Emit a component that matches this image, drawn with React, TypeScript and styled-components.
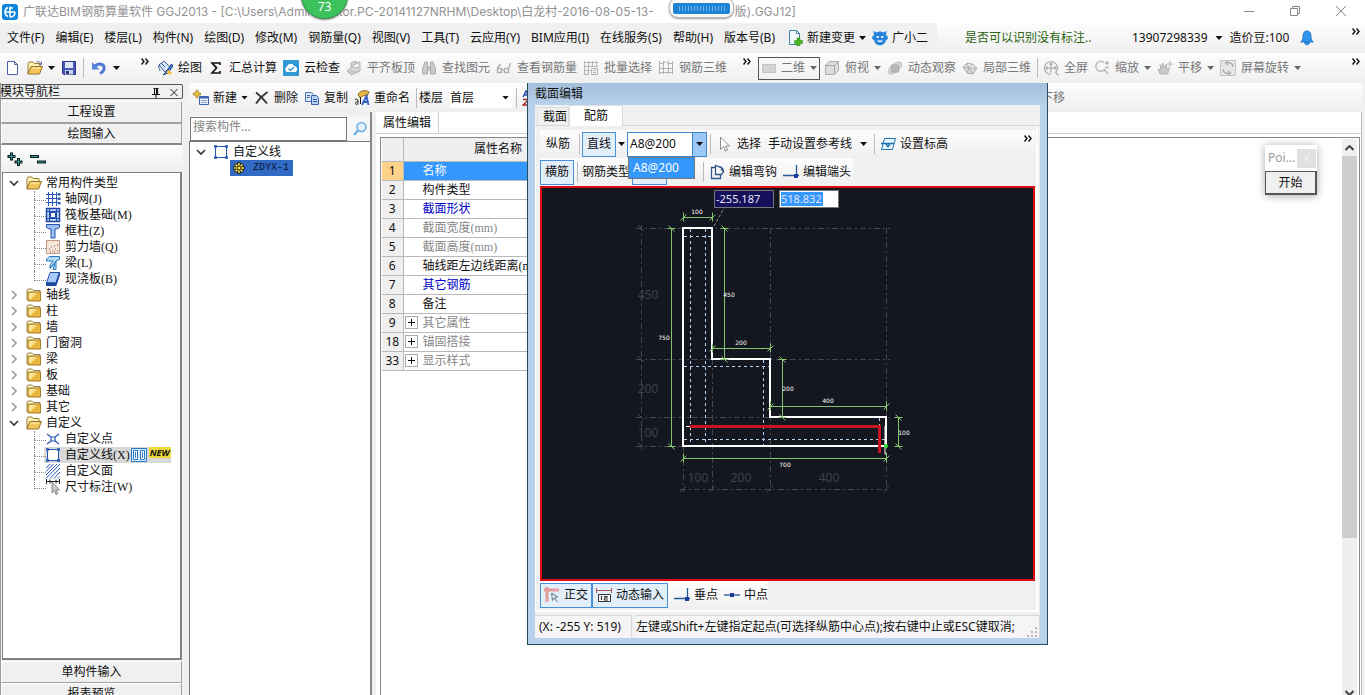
import React from "react";
import styled, { createGlobalStyle, css } from "styled-components";

const UI = '"Noto Sans", "Noto Sans CJK SC", sans-serif';
const SONG = '"Liberation Serif", "Noto Sans CJK SC", serif';

const Global = createGlobalStyle`
  * { box-sizing: border-box; }
  body { margin: 0; background: #f0f0f0; overflow: hidden; }
  button, input, select { font: inherit; color: inherit; }
  button { border: 0; background: none; padding: 0; margin: 0; white-space: nowrap; }
`;

/* ---------- icons ---------- */

const folder = (
  <>
    <path d="M1 13V3.500L2 2h4l1.500 1.500H14V13z" fill="#fff3c8" stroke="#9a8350" />
    <path d="M2 5h12.500v9H2z" fill="#eab83c" stroke="#a5802c" />
    <path d="M3 6h8l-6 6H3z" fill="#fde494" />
  </>
);

const openFolder = (
  <>
    <path d="M1 14V3.500L2 2h4l1.500 1.500H13V7" fill="#fff0b4" stroke="#9a7a30" />
    <path d="M1 14L4 6.500h11.500L12.500 14z" fill="#f3c65a" stroke="#94732a" />
    <path d="M5 8h8" stroke="#fff0b8" />
  </>
);

const frame = (
  <path
    d="M2.500 2.500h11v11h-11zM1.500 1.500h2v2h-2zM12.500 1.500h2v2h-2zM1.500 12.500h2v2h-2zM12.500 12.500h2v2h-2z"
    fill="#fff"
    stroke="#2454b4"
  />
);

const ICONS: Record<string, React.ReactNode> = {
  logo: (
    <>
      <rect width="16" height="16" rx="3" fill="#0d86dc" />
      <path d="M8 2.500v11M3 8h10M6 3.500C3.500 4.500 3 6 3 8s.5 3.500 3 4.500M8 13c3 0 5-2 5-5M8 4h3" fill="none" stroke="#fff" strokeWidth="1.500" />
    </>
  ),
  file: <path d="M2.500 1.500h7l3 3v10h-10zM9.500 1.500v3h3" fill="#fff" stroke="#44659f" />,
  open: (
    <>
      {openFolder}
      <path d="M9 2.500c2-1.500 4-1 5 1.500M14.500 1.500V4.500H12" fill="none" stroke="#5a76a8" />
    </>
  ),
  save: (
    <>
      <path d="M1.500 1.500h13v13h-12l-1-1z" fill="#4858b8" stroke="#2c3488" />
      <path d="M4 2h8v6H4z" fill="#dfe6fa" />
      <path d="M4 10h8v4.500H4z" fill="#c9d0ea" />
      <path d="M5 11h3v3H5z" fill="#2c3488" />
    </>
  ),
  undo: (
    <>
      <path d="M4 6c5-4 10-1 9 3-.5 2-2 3.500-4 4.500" fill="none" stroke="#5078d4" strokeWidth="3" />
      <path d="M1 2v7.500h7.500z" fill="#5a86dc" />
    </>
  ),
  paint: (
    <>
      <path d="M2 5l5-4 6 6-5 5z" fill="#d5e3fa" stroke="#3a5a94" />
      <path d="M2 5c-1 3 1 4 1 6M4 3l4 4" fill="none" stroke="#3a5a94" />
      <path d="M14.500 4L9 12l-3 3 5-2 5-7z" fill="#4c7cd0" stroke="#24458c" />
      <path d="M9 12l4 3 2-2-3-3z" fill="#f0c23c" />
    </>
  ),
  sigma: <path d="M12 5V3H4l4.500 5L4 13h8v-2M4 3l5 5" fill="none" stroke="#111" strokeWidth="1.600" />,
  cloud: (
    <>
      <rect width="16" height="16" rx="1" fill="#2e9ad4" />
      <path d="M4 12a3 3 0 010-5.500C5 3 10 3 11 6c4 0 4 6 1 6z" fill="#fff" />
      <path d="M5.500 8.500l2 2L11 7" fill="none" stroke="#2e9ad4" strokeWidth="1.300" />
    </>
  ),
  slab: <path d="M1 11l4-3V3l5-2v3L7 5v3l7-1v4l-9 4zM2 12h10M10 3l4-1v5" fill="#d6d6d6" stroke="#b3b3b3" />,
  binoc: <path d="M1.500 14V9l2.500-7h2.500v12zM14.500 14V9L12 2H9.500v12zM6.500 7h3v3h-3z" fill="#ccc" stroke="#aaa" />,
  glasses: <path d="M1.500 8.500h4v4h-4zM8.500 8.500h4v4h-4zM5.500 10h3M1.500 8l3-4M12.500 9l2-6" fill="none" stroke="#b0b0b0" strokeWidth="1.400" />,
  batch: <path d="M1.500 1v13M1 2.500h14M1 6.500h14M1 10.500h6M1 14.500h5M5.500 1v13M9.500 1v6M13.500 1v6M8.500 8.500h6v6h-6zM10 10.500h3M10 12.500h3" fill="none" stroke="#b4b4b4" />,
  grid3: <path d="M1.500 1v13M5.500 1v13M10.500 1v13M14.500 1v13M1 3.500h4c1-2 4-2 5 0h5M1 8.500h14M1 12.500h14" fill="none" stroke="#b0b0b0" />,
  flat: <path d="M1.500 4.500h13v8h-13z" fill="#d4d4d4" stroke="#c2c2c2" />,
  cube: (
    <>
      <path d="M1.500 5.500l4-4h9v9l-4 4h-9z" fill="#ddd" stroke="#aaa" />
      <path d="M1.500 5.500h9v9M10.500 5.500l4-4" fill="none" stroke="#aaa" />
    </>
  ),
  orbit: (
    <>
      <ellipse cx="8" cy="8" rx="8" ry="4" transform="rotate(-40 8 8)" fill="#d8d8d8" stroke="#c0c0c0" />
      <path d="M4.500 5h7v7h-7z" fill="#b8b8b8" stroke="#aaa" />
    </>
  ),
  local3d: <path d="M1 7l4-4 5 1 5 4-4 6-6-1zM5 3l2 5 8 0M7 8l-2 5M1 7l6 1 4 6M10 4L7 8" fill="#d8d8d8" stroke="#b0b0b0" />,
  full: <path d="M14.500 8A6.500 6.500 0 108 14.500M8 3v10M3 8h10M6.500 4.500L8 3l1.500 1.500M4.500 6.500L3 8l1.500 1.500M11.500 6.500L13 8l-1.500 1.500M14.500 8c0 2-1 3-2 4.500l3 3" fill="none" stroke="#aaa" strokeWidth="1.200" />,
  zoomin: <path d="M10 2.500A5 5 0 1011 9M10 9l4 5M13 1v4M11 3h4M11 7.500h4" fill="none" stroke="#b5b5b5" strokeWidth="1.300" />,
  hand: <path d="M3 14l-2-5 3 1-1-6 2 4 1-5 1.500 5 2-4v5l3-1-2 6zM13 1v6M10 4h6" fill="#c8c8c8" stroke="#b5b5b5" />,
  rotate: (
    <>
      <path d="M.5.5h15v15H.5z" fill="#e6e6e6" stroke="#c4c4c4" />
      <path d="M3 9c0 4 4 5 7 4M13 7c0-4-4-5-7-4M8 1L5.500 3 8 5M8 11l2.500 2L8 15" fill="none" stroke="#aaa" strokeWidth="1.300" />
    </>
  ),
  change: (
    <>
      <path d="M2.500 .5h7l3 3v11h-10z" fill="#f4f9fd" stroke="#4484a4" />
      <path d="M9.500 .5v3h3" fill="none" stroke="#4484a4" />
      <path d="M10 8h3v2.500h2.500v3H13V16h-3v-2.500H7.500v-3H10z" fill="#4cb820" stroke="#2c8410" strokeWidth=".5" />
    </>
  ),
  robot: (
    <>
      <path d="M1.500 1l3 1.500c2-1.500 5-1.500 7 0l3-1.500-.5 4c2.500 2 2.500 4 0 5-1 7-11 7-12 0-2.500-1-2.500-3 0-5z" fill="#2583d8" />
      <path d="M4.500 7h2.500M9 7h2.500" stroke="#fff" strokeWidth="1.500" />
      <path d="M5 10.500h6c-1 2-5 2-6 0z" fill="#fff" />
    </>
  ),
  bell: <path d="M8 1c-4 0-4 4-4 6 0 3-1 4-2.500 5h13C13 11 12 10 12 7c0-2 0-6-4-6zM5.500 12.500c0 3 5 3 5 0z" fill="#2f96f0" stroke="#1668b8" strokeWidth=".8" />,
  add: (
    <>
      <path d="M6.500 6.500h9v8h-9z" fill="#eaf2ff" stroke="#3c64b0" />
      <path d="M6.500 6.500h9v2h-9z" fill="#3c64b0" />
      <path d="M8 10.500h6M8 12.500h6" stroke="#8aa6d8" />
      <path d="M3 .5h2V3h2.500v2H5v2.500H3V5H.5V3H3z" fill="#f8d048" stroke="#a07818" strokeWidth=".8" />
    </>
  ),
  cross: <path d="M2 2.500c4 3 8 7 11 11M13.500 2C9 5 5 9 2 13.500" fill="none" stroke="#333" strokeWidth="1.800" />,
  copy: (
    <>
      <path d="M1.500 2.500h6l2 2v7h-8z" fill="#dce9fb" stroke="#4a72b4" />
      <path d="M7.500 5.500h5l2 2v7h-7z" fill="#b8d0f4" stroke="#3a62a8" />
      <path d="M3 5.500h3M3 7.500h3M9 9.500h4M9 11.500h4" stroke="#3a62a8" />
    </>
  ),
  rename: (
    <>
      <path d="M4 4c3-4 8-4 11-2l-2 4c-3-1-5 0-7 2z" fill="#e8b848" stroke="#8c6820" />
      <path d="M1 9.500c2-1 3 0 3 1.500v3.500M4 11.500c-3 0-3.500 3-1 3M6.500 7v7" fill="none" stroke="#222" />
      <path d="M8 15L12.500 6l2 9M10 12h4.500" fill="none" stroke="#2f62c4" strokeWidth="1.800" />
    </>
  ),
  sort: (
    <>
      <path d="M1 7l3-6 3 6M2 5h4" fill="none" stroke="#2c4cb0" strokeWidth="1.400" />
      <path d="M1 9.500h6L1 15h6" fill="none" stroke="#a82c2c" strokeWidth="1.400" />
    </>
  ),
  search: (
    <>
      <circle cx="9.500" cy="6" r="4.500" fill="#e4f2ff" stroke="#6aaee4" strokeWidth="1.600" />
      <path d="M6 9.500L2 14" stroke="#6aaee4" strokeWidth="2.400" />
    </>
  ),
  expandAll: (
    <>
      <path d="M4.500 1.500v8M.5 5.500h8M11.500 7v8M7.500 11h8" stroke="#0b1c22" strokeWidth="3" />
      <path d="M4.500 2.500v6M1.500 5.500h6M11.500 8v6M8.500 11h6" stroke="#2c9c8c" />
    </>
  ),
  collapseAll: (
    <>
      <path d="M0 5.500h9M7 11h9" stroke="#0b1c22" strokeWidth="3" />
      <path d="M1 5.500h7M8 11h7" stroke="#2c9c8c" />
    </>
  ),
  pin: <path d="M5.500 4.500h5M6.500 4v6M9.500 4v6M8.500 4v6M4 10.500h8M8 11v3" fill="none" stroke="#111" />,
  x: <path d="M4.500 5l7 7M11.500 5l-7 7" fill="none" stroke="#222" />,
  folder,
  openFolder,
  frame,
  axis: (
    <>
      <path d="M3.500 1v14M7.500 1v14M11.500 1v14M1 3.500h14M1 7.500h14M1 11.500h14" stroke="#2c58b8" />
      <path d="M13 2h2.500v2.500H13zM13 6.500h2.500V9H13zM13 11h2.500v2.500H13z" fill="#2c58b8" />
    </>
  ),
  raft: (
    <>
      <path d="M1.500 1.500h13v13h-13z" fill="#c2d4f6" stroke="#1c48a8" strokeWidth="1.500" />
      <path d="M4.500 1v14M11.500 1v14M1 4.500h14M1 11.500h14" stroke="#1c48a8" />
      <path d="M5.500 5.500h5v5h-5z" fill="#fff" stroke="#1c48a8" />
    </>
  ),
  column: <path d="M1.500 1.500h13v3l-3 1.500h-1.500v9H6V6H4.500l-3-1.500z" fill="#9cc0f4" stroke="#2450a8" />,
  wall: (
    <>
      <path d="M1.500 1.500h13v13h-13z" fill="#f6e6da" stroke="#c09880" />
      <path d="M4 10h1M7 12h1M10 10h1M6 8h1M9 7h1M12 12h1M5 13h1M12 6h1M9 13h1" stroke="#805848" />
    </>
  ),
  beam: <path d="M1.500 4l3-2.500h10v3L11 6v8.500H8l2-6-5 5V10l3-4H1.500zM11 6L5 13" fill="#b4dafa" stroke="#2878c0" />,
  slabB: (
    <>
      <path d="M5 1.500h9.500L11 12H1.500z" fill="#a8ccfa" stroke="#2450a8" />
      <path d="M1.500 12v2.500H11L14.500 4V1.500L11 12z" fill="#1c48a0" stroke="#1c48a0" />
    </>
  ),
  point: <path d="M6 6h4v4H6zM2 3l4 3M14 3l-4 3M2 13l4-3M14 13l-4-3" fill="none" stroke="#2454b4" strokeWidth="1.200" />,
  hatch: <path d="M1 5l4-4M1 8.500L8.500 1M1 12L12 1M1 15.500L15 1M5 15.500L15 5M9 15.500L15 9M13 15.500l2-2" stroke="#2454b4" />,
  dim: (
    <>
      <path d="M1.500 0v5M14.500 0v5M1 2.500h14M5 .5v4M11 .5v4" stroke="#222" />
      <path d="M7 3v11l2.500-2.500L11 15.500l2-1-2-3.500h3.500z" fill="#c8c8c8" stroke="#888" />
    </>
  ),
  lib: (
    <>
      <path d="M.5 1.500h15v13H.5z" fill="#d8ecff" stroke="#2878c8" />
      <path d="M2.500 3.500h4v9h-4zM9.500 3.500h4v9h-4zM4.500 5v6M11.500 5v6" fill="#fff" stroke="#2878c8" />
    </>
  ),
  gear: (
    <>
      <path d="M8 2v12M2 8h12M4 4l8 8M12 4l-8 8" stroke="#222" strokeWidth="3" />
      <path d="M8 3v10M3 8h10M4.500 4.500l7 7M11.500 4.500l-7 7" stroke="#ffe838" strokeWidth="1.500" />
      <circle cx="8" cy="8" r="2" fill="#ffe838" stroke="#222" />
    </>
  ),
  cursor: <path d="M4.500 1v12.500l3-3 2 4.500 2-1-2-4h4z" fill="#fff" stroke="#8a8a8a" />,
  level: (
    <>
      <path d="M4.500 2.500h11l-3 11h-11z" fill="#e4f4ff" stroke="#2474ac" />
      <path d="M1 7.500h13M6 8l2 2.500L10 8" fill="none" stroke="#2474ac" strokeWidth="1.500" />
    </>
  ),
  hook: <path d="M6.500 3.500h-4v11h9v-4M6.500 10.500v-9l3 1c4 1 5 3 5 5l-2 3zM12 5l3 3" fill="none" stroke="#34588c" strokeWidth="1.300" />,
  endpoint: (
    <>
      <path d="M0 11.500h16M13.500 1v13" stroke="#2c5a94" strokeWidth="1.300" />
      <path d="M11 10h4v4h-4z" fill="#1c3c9c" />
    </>
  ),
  ortho: (
    <>
      <path d="M0 3h15M3 0v15" stroke="#e49c9c" strokeWidth="3" />
      <path d="M7.500 6l1 7 2-2 3 4M7.500 6l6 4-2.500 1" fill="none" stroke="#788898" strokeWidth="1.100" />
    </>
  ),
  dyn: (
    <>
      <path d="M.5 1v5M15.500 1v5M1 3.500h14" fill="none" stroke="#b05858" />
      <path d="M2.500 7.500h12v7h-12z" fill="#fff" stroke="#333" />
      <path d="M5.500 9v4M8 9.500h3v1.500H8.500v2H12" fill="none" stroke="#333" strokeWidth="1.200" />
    </>
  ),
  mid: (
    <>
      <path d="M0 8h16" stroke="#3c6ca4" strokeWidth="1.500" />
      <path d="M6 6h4v4H6z" fill="#1c3c8c" />
    </>
  ),
};

const Svg = styled.svg`
  display: block;
  flex: none;
`;
const Icon = ({ name, size = 16 }: { name: string; size?: number }) => (
  <Svg width={size} height={size} viewBox="0 0 16 16" aria-hidden="true">
    {ICONS[name]}
  </Svg>
);

const Arrow = styled.span<{ $grey?: boolean }>`
  flex: none;
  width: 7px;
  height: 4px;
  background: ${(p) => (p.$grey ? "#666" : "#111")};
  clip-path: polygon(0 0, 100% 0, 50% 100%);
`;

const ChevronMark = styled.svg`
  display: block;
  flex: none;
`;
const More = () => (
  <ChevronMark width="8" height="7" viewBox="0 0 8 7" aria-hidden="true">
    <path d="M.5.5l2.500 3-2.500 3M4.500.5l2.500 3-2.500 3" fill="none" stroke="#111" strokeWidth="1.400" />
  </ChevronMark>
);

/* ---------- window chrome ---------- */

const Shell = styled.div`
  position: relative;
  display: flex;
  flex-direction: column;
  height: 100vh;
  overflow: hidden;
  background: #f0f0f0;
  color: #111;
  font: 12px/16px ${UI};
`;

const TitleBar = styled.header`
  display: flex;
  align-items: center;
  flex: none;
  height: 23px;
  padding: 0 16px 0 2px;
  gap: 5px;
  background: #fff;
  color: #929292;
  white-space: nowrap;
`;
const Caption = styled.h1`
  display: flex;
  flex: 1;
  gap: 81px;
  margin: 0;
  font: 12px/16px Inter, "Noto Sans CJK SC", sans-serif;
`;
const WindowButtons = styled.div`
  display: flex;
  gap: 30px;
  padding-bottom: 2px;
`;

const Bar = styled.div`
  display: flex;
  flex: none;
  height: 30px;
`;
const Group = styled.div<{ $w?: number; $gap?: number; $flat?: boolean; $pad?: number }>`
  display: flex;
  align-items: center;
  flex: ${(p) => (p.$w ? `0 0 ${p.$w}px` : "1 1 0")};
  gap: ${(p) => p.$gap ?? 0}px;
  padding: 0 2px 0 ${(p) => p.$pad ?? 2}px;
  min-width: 0;
  overflow: hidden;
  background: ${(p) => (p.$flat ? "#f0f0f0" : "linear-gradient(#fdfdfd, #efefef)")};
`;
const MenuItem = styled.button`
  flex: none;
`;
const MenuTools = styled.div`
  display: flex;
  margin-left: -2px;
`;
const Push = styled.span`
  display: flex;
  align-self: flex-start;
  margin-left: auto;
  padding: 5px 3px 0 0;
`;
const Tool = styled.button<{ $off?: boolean; $gap?: number; $on?: boolean; $pad?: number }>`
  display: flex;
  align-items: center;
  flex: none;
  height: 25px;
  gap: ${(p) => p.$gap ?? 5}px;
  padding: 0 ${(p) => p.$pad ?? 3}px;
  color: ${(p) => (p.$off ? "#777" : "#111")};
  ${(p) =>
    p.$on &&
    css`
      background: #e2effb;
      border: 1px solid #4a90d9;
    `}
`;
const Rule = styled.span`
  flex: none;
  width: 1px;
  height: 20px;
  margin: 0 2px 0 3px;
  background: #bcbcbc;
`;
const News = styled.a`
  color: #2c6410;
  text-decoration: none;
`;
const ViewMode = styled.button`
  display: flex;
  align-items: center;
  flex: none;
  gap: 4px;
  width: 62px;
  height: 23px;
  margin-right: 1px;
  padding: 0 2px;
  border: 1px solid #555;
  color: #777;
  ${Arrow} { margin-left: auto; }
`;

/* ---------- body ---------- */

const Body = styled.div`
  display: flex;
  flex: 1;
  min-height: 0;
  gap: 6px;
`;
const Nav = styled.nav`
  display: flex;
  flex-direction: column;
  flex: 0 0 183px;
  margin-bottom: -10px;
  border-left: 1px solid #9a9a9a;
  overflow: hidden;
`;
const NavHead = styled.div`
  display: flex;
  align-items: center;
  flex: none;
  height: 15px;
  margin: 1px 0 2px -1px;
  border: 1px solid #555;
  border-left: 0;
  border-radius: 2px;
  h2 { flex: 1; margin: 0; font: inherit; }
  button + button { margin-left: 2px; }
`;
const NavTab = styled.button<{ $down?: boolean }>`
  flex: 0 0 22px;
  margin-right: 1px;
  border: 1px solid #a0a0a0;
  border-left-color: #fff;
  border-top-color: ${(p) => (p.$down ? "#a0a0a0" : "#fff")};
  ${(p) => p.$down && "border-bottom: 2px solid #888;"}
  background: #f0f0f0;
`;
const NavTools = styled.div`
  display: flex;
  align-items: center;
  flex: 0 0 27px;
  gap: 7px;
  padding-left: 6px;
  background: linear-gradient(#fdfdfd, #efefef);
`;
const Tree = styled.ul<{ $framed?: boolean }>`
  flex: 1;
  min-height: 0;
  margin: 0;
  padding: 2px 0 0;
  list-style: none;
  overflow: hidden;
  background: #fff;
  font-family: ${SONG};
  ${(p) =>
    p.$framed &&
    css`
      margin: 0 1px 1px;
      border: 1px solid #808080;
      border-right-width: 2px;
      border-bottom-width: 2px;
    `}
  ul { margin: 0; padding: 0; list-style: none; }
`;
const Node = styled.button`
  display: flex;
  align-items: center;
  height: 16px;
  padding-left: 6px;
  gap: 4px;
`;
const Twisty = styled.svg`
  display: block;
  flex: none;
  margin-right: 3px;
`;
const Leaf = styled.button<{ $hot?: boolean; $last?: boolean }>`
  display: flex;
  align-items: center;
  position: relative;
  height: 16px;
  margin-left: 31px;
  padding-left: 11px;
  gap: 4px;
  background: ${(p) => (p.$hot ? "linear-gradient(#d9d9d9, #d9d9d9) 10px 0 / 100% 100% no-repeat" : "none")};
  &::before {
    content: "";
    position: absolute;
    left: 0;
    top: 0;
    width: 11px;
    height: 9px;
    border-left: 1px dotted #888;
    border-bottom: 1px dotted #888;
  }
  &::after {
    content: "";
    position: absolute;
    left: 0;
    top: 8px;
    height: 8px;
    border-left: ${(p) => (p.$last ? "0" : "1px dotted #888")};
  }
`;
const Extra = styled.span`
  display: flex;
  align-items: flex-start;
  margin-left: -3px;
  gap: 2px;
`;
const NewTag = styled.b`
  height: 11px;
  padding: 0 2px 0 1px;
  background: #ecd838;
  color: #111;
  font: italic bold 9px/11px ${UI};
`;

const Main = styled.main`
  display: flex;
  flex-direction: column;
  flex: 1;
  min-width: 0;
  padding-right: 3px;
`;
const MainTools = styled.div`
  display: flex;
  align-items: center;
  flex: 0 0 29px;
  padding-left: 1px;
  background: linear-gradient(#fdfdfd, #efefef);
`;
const FloorSelect = styled.select`
  appearance: none;
  width: 63px;
  height: 20px;
  margin-left: 7px;
  padding: 0;
  border: 0;
  background: #fff;
  line-height: 16px;
`;
const SelectWrap = styled.span`
  display: flex;
  align-items: center;
  ${Arrow} { margin: 0 4px 0 -11px; pointer-events: none; }
`;
const FarTool = styled.button`
  margin-left: 500px;
  color: #777;
`;
const Columns = styled.div`
  display: flex;
  flex: 1;
  min-height: 0;
  gap: 4px;
`;
const Parts = styled.section`
  display: flex;
  flex-direction: column;
  flex: 0 0 183px;
  padding-top: 4px;
  border-right: 2px solid #888;
`;
const SearchRow = styled.div`
  display: flex;
  align-items: center;
  flex: 0 0 26px;
  gap: 5px;
  padding-left: 1px;
  background: #f7f7f7;
  border-bottom: 1px solid #777;
`;
const SearchBox = styled.input`
  width: 157px;
  height: 24px;
  padding: 0 2px 4px;
  border: 1px solid #777;
  background: #fff;
  &::placeholder { color: #858585; opacity: 1; }
`;
const PartTree = styled(Tree)`
  border-left: 1px solid #777;
`;
const Picked = styled.button`
  display: flex;
  align-items: center;
  gap: 6px;
  height: 16px;
  width: 63px;
  margin-left: 40px;
  padding-left: 1px;
  background: #316ac5;
  color: #0a1430;
  font: 10px/16px "Liberation Mono", monospace;
`;

const Props = styled.section`
  display: flex;
  flex-direction: column;
  flex: 1;
  min-width: 0;
  background: #fff;
  border-right: 1px solid #bbb;
`;
const TabStrip = styled.div`
  display: flex;
  flex: 0 0 21px;
  border-bottom: 1px solid #d0d0d0;
`;
const PropTab = styled.button`
  height: 21px;
  padding: 0 7px;
  border-right: 1px solid #d0d0d0;
  background: #fff;
`;
const Sheet = styled.div`
  display: flex;
  flex: 1;
  min-height: 0;
  margin: 3px 1px 0 4px;
  border: 1px solid #888;
  border-width: 1px 1px 0;
`;
const SheetBody = styled.div`
  flex: 1;
  min-width: 0;
  padding: 0 0 0 1px;
  overflow: hidden;
`;
const Table = styled.table`
  table-layout: fixed;
  width: 570px;
  border-collapse: collapse;
  font-family: ${SONG};
  th, td {
    height: 19px;
    padding: 0;
    border: 0 solid #b8b8b8;
    border-width: 0 1px 1px 0;
    line-height: 16px;
    white-space: nowrap;
    overflow: hidden;
  }
  thead th { height: 23px; font-weight: 400; background: #efefef; }
`;
const RowNo = styled.th<{ $on?: boolean }>`
  font: 12px/16px ${UI};
  text-align: center;
  background: ${(p) => (p.$on ? "#ffd28a" : "#efefef")};
`;
const NameCell = styled.td<{ $fold?: boolean; $tone: string; $on?: boolean }>`
  color: ${(p) => p.$tone};
  background: ${(p) => (p.$on ? "#3397fd" : "#fff")};
  & > div { display: flex; align-items: center; padding-left: ${(p) => (p.$fold ? 1 : 19)}px; }
`;
const Plus = styled.button`
  width: 13px;
  height: 13px;
  margin-right: 5px;
  border: 1px solid #aaa;
  background: linear-gradient(#111, #111) 50% 50% / 7px 1px no-repeat, linear-gradient(#111, #111) 50% 50% / 1px 7px no-repeat, #fff;
`;
const ScrollTrack = styled.div`
  display: flex;
  flex-direction: column;
  justify-content: space-between;
  align-items: center;
  flex: 0 0 15px;
  margin: 1px 2px -6px 0;
  background: #efefef;
`;
const Thumb = styled.div`
  flex: 0 0 68%;
  width: 15px;
  margin-bottom: auto;
  background: #cdcdcd;
`;
const ScrollButton = styled.button`
  display: flex;
  align-items: center;
  justify-content: center;
  flex: 0 0 17px;
  width: 15px;
`;

/* ---------- section editor dialog ---------- */

const Dialog = styled.section`
  position: absolute;
  left: 527px;
  top: 83px;
  display: flex;
  flex-direction: column;
  width: 521px;
  height: 562px;
  padding: 0 7px 6px;
  border: 1px solid #24505c;
  border-top: 0;
  background: linear-gradient(#a3bedb, #b9d2eb 22px, #b9d2eb);
`;
const DialogTitle = styled.h2`
  flex: 0 0 22px;
  margin: 0;
  font: 12px/21px ${UI};
`;
const Pane = styled.div`
  display: flex;
  flex-direction: column;
  flex: 1;
  min-height: 0;
  background: #f0f0f0;
`;
const DialogTabs = styled.div`
  display: flex;
  align-items: flex-end;
  flex: 0 0 21px;
  padding-left: 2px;
  border-bottom: 1px solid #d6d6d6;
`;
const DialogTab = styled.button<{ $on?: boolean }>`
  height: ${(p) => (p.$on ? 21 : 18)}px;
  width: ${(p) => (p.$on ? 54 : 32)}px;
  padding: 0 0 0 ${(p) => (p.$on ? 14 : 5)}px;
  margin-bottom: ${(p) => (p.$on ? -1 : 0)}px;
  text-align: left;
  border: 1px solid #dcdcdc;
  border-bottom: 0;
  background: ${(p) => (p.$on ? "#fff" : "#f0f0f0")};
`;
const Frame = styled.div`
  display: flex;
  flex-direction: column;
  flex: 1;
  min-height: 0;
  margin-right: 2px;
  padding: 4px 1px 1px 4px;
  background: #f0f0f0;
  border: 0 solid #fff;
  border-width: 0 2px 2px 1px;
`;
const ToolRow = styled.div<{ $fit?: boolean }>`
  display: flex;
  align-items: center;
  flex: 0 0 28px;
  align-self: ${(p) => (p.$fit ? "flex-start" : "stretch")};
  background: linear-gradient(#fdfdfd, #efefef);
`;
const Combo = styled.div`
  position: relative;
  display: flex;
  width: 80px;
  height: 25px;
  border: 1px solid #3f87d0;
  background: #fff;
  input { width: 64px; padding: 0 2px; border: 0; outline: 0; background: #fff; }
  button { display: flex; align-items: center; justify-content: center; flex: 1; background: #9cc8f6; border-left: 1px solid #3f87d0; }
`;
const Options = styled.ul`
  position: absolute;
  left: 0;
  top: 24px;
  width: 67px;
  margin: 0;
  padding: 0;
  z-index: 2;
  list-style: none;
  border: 1px solid #777;
  li { padding: 2px 4px; background: #3397fd; color: #fff; }
`;
const RebarType = styled(Tool)<{ $w: number }>`
  width: ${(p) => p.$w}px;
`;
const Canvas = styled.div`
  position: relative;
  flex: 1;
  min-height: 0;
  overflow: hidden;
  border: 2px solid #dc0c10;
  background: #14171f;
`;
const Drawing = styled.svg`
  display: block;
  width: 491px;
  height: 390px;
`;
const Coord = styled.label<{ $x: number; $light?: boolean }>`
  position: absolute;
  left: ${(p) => p.$x}px;
  top: 2px;
  display: flex;
  align-items: center;
  width: 60px;
  height: 18px;
  padding: 0 1px;
  border: 1px solid #777;
  background: ${(p) => (p.$light ? "#fff" : "#15105a")};
  color: #e4e4f4;
  input {
    width: ${(p) => (p.$light ? 42 : 56)}px;
    height: 14px;
    padding: 0;
    border: 0;
    outline: 0;
    background: ${(p) => (p.$light ? "#3397fd" : "transparent")};
    font: 11px/14px "Noto Sans", sans-serif;
  }
`;
const StatusBar = styled.footer`
  display: flex;
  flex: 0 0 23px;
  margin-top: 3px;
  gap: 3px;
  white-space: nowrap;
`;
const StatusCell = styled.span<{ $w?: number }>`
  display: flex;
  align-items: center;
  justify-content: space-between;
  flex: ${(p) => (p.$w ? `0 0 ${p.$w}px` : "1")};
  padding-left: ${(p) => (p.$w ? 4 : 1)}px;
  border-top: 1px solid #d8d8d8;
  border-right: 1px solid #d8d8d8;
  background: #f5f5f5;
  overflow: hidden;
`;
const Grip = styled.svg`
  display: block;
  flex: none;
  align-self: flex-end;
`;

/* ---------- overlays ---------- */

const Mini = styled.section`
  position: absolute;
  right: 48px;
  top: 145px;
  width: 52px;
  background: #fff;
  box-shadow: 0 1px 8px rgba(0, 0, 0, 0.35);
`;
const MiniHead = styled.div`
  display: flex;
  align-items: center;
  justify-content: space-between;
  height: 26px;
  padding: 0 1px 0 3px;
  color: #999;
  button { width: 19px; height: 19px; background: #e0e0e0; color: #f4f4f4; line-height: 17px; }
`;
const StartButton = styled.button`
  display: block;
  width: 100%;
  height: 24px;
  border: 1px solid #555;
  border-width: 1px 2px 2px 1px;
  background: #f0f0f0;
`;
const Score = styled.div`
  position: absolute;
  left: 301px;
  top: -28px;
  width: 47px;
  height: 47px;
  padding-top: 26px;
  border: 1px solid #2f9c4c;
  border-radius: 50%;
  background: #3cc25c;
  box-shadow: 0 1px 2px #777;
  color: #fff;
  text-align: center;
`;
const Meter = styled.div`
  position: absolute;
  left: 669px;
  top: -3px;
  width: 65px;
  height: 21px;
  padding: 5px 3px 3px;
  border: 1px solid #bbb;
  border-radius: 9px;
  background: #f8f8f8;
  box-shadow: 0 1px 2px #999;
  div {
    height: 11px;
    border-radius: 2px;
    background: repeating-linear-gradient(90deg, transparent 0 2px, #6cb2ee 2px 3px) 4px 3px / 49px 5px no-repeat, #1f83d4;
  }
`;

/* ---------- data ---------- */

const menus = ["文件(F)", "编辑(E)", "楼层(L)", "构件(N)", "绘图(D)", "修改(M)", "钢筋量(Q)", "视图(V)", "工具(T)", "云应用(Y)", "BIM应用(I)", "在线服务(S)", "帮助(H)", "版本号(B)"];

type T = { icon: string; label: string; off?: boolean; drop?: boolean };
const drawTools: T[] = [
  { icon: "paint", label: "绘图" },
  { icon: "sigma", label: "汇总计算" },
  { icon: "cloud", label: "云检查" },
  { icon: "slab", label: "平齐板顶", off: true },
  { icon: "binoc", label: "查找图元", off: true },
  { icon: "glasses", label: "查看钢筋量", off: true },
  { icon: "batch", label: "批量选择", off: true },
  { icon: "grid3", label: "钢筋三维", off: true },
];
const viewTools: T[] = [
  { icon: "cube", label: "俯视", off: true, drop: true },
  { icon: "orbit", label: "动态观察", off: true },
  { icon: "local3d", label: "局部三维", off: true },
];
const zoomTools: T[] = [
  { icon: "full", label: "全屏", off: true },
  { icon: "zoomin", label: "缩放", off: true, drop: true },
  { icon: "hand", label: "平移", off: true, drop: true },
  { icon: "rotate", label: "屏幕旋转", off: true, drop: true },
];
const partTools: T[] = [
  { icon: "add", label: "新建", drop: true },
  { icon: "cross", label: "删除" },
  { icon: "copy", label: "复制" },
  { icon: "rename", label: "重命名" },
];
const common = [
  ["axis", "轴网(J)"],
  ["raft", "筏板基础(M)"],
  ["column", "框柱(Z)"],
  ["wall", "剪力墙(Q)"],
  ["beam", "梁(L)"],
  ["slabB", "现浇板(B)"],
];
const folders = ["轴线", "柱", "墙", "门窗洞", "梁", "板", "基础", "其它"];
const custom = [
  ["point", "自定义点"],
  ["frame", "自定义线(X)"],
  ["hatch", "自定义面"],
  ["dim", "尺寸标注(W)"],
];
const rows: { n: number; label: string; tone: string; fold?: boolean }[] = [
  { n: 1, label: "名称", tone: "#ffffff" },
  { n: 2, label: "构件类型", tone: "#111111" },
  { n: 3, label: "截面形状", tone: "#0000c8" },
  { n: 4, label: "截面宽度(mm)", tone: "#888888" },
  { n: 5, label: "截面高度(mm)", tone: "#888888" },
  { n: 6, label: "轴线距左边线距离(mm)", tone: "#111111" },
  { n: 7, label: "其它钢筋", tone: "#0000c8" },
  { n: 8, label: "备注", tone: "#111111" },
  { n: 9, label: "其它属性", tone: "#888888", fold: true },
  { n: 18, label: "锚固搭接", tone: "#888888", fold: true },
  { n: 33, label: "显示样式", tone: "#888888", fold: true },
];

const Tools = ({ items, gap }: { items: T[]; gap?: number }) => (
  <>
    {items.map((t) => (
      <Tool key={t.label} $off={t.off} $gap={gap}>
        <Icon name={t.icon} />
        {t.label}
        {t.drop && <Arrow $grey={t.off} />}
      </Tool>
    ))}
  </>
);

const Twist = ({ open }: { open?: boolean }) => (
  <Twisty width="10" height="10" viewBox="0 0 10 10" aria-hidden="true">
    <path d={open ? "M1 3l4 4 4-4" : "M3 1l4 4-4 4"} fill="none" stroke={open ? "#333" : "#999"} strokeWidth="1.600" />
  </Twisty>
);

/* Dimension lines: horizontal or vertical, with a slash and a cross tick at each end. */
const dims: [number, number, number, number][] = [
  [683, 217, 712, 217],
  [671, 228, 671, 446],
  [724, 228, 724, 359],
  [712, 348, 770, 348],
  [782, 359, 782, 417],
  [770, 406, 886, 406],
  [898, 417, 898, 446],
  [683, 458, 886, 458],
];
const tick = (x: number, y: number, flat: boolean) =>
  flat ? `M${x} ${y - 5}v9M${x - 3} ${y + 3}l6-6` : `M${x - 4} ${y}h8M${x - 3} ${y - 3}l6 6`;
const dimLabels: [number, number, string][] = [
  [697, 214, "100"],
  [664, 340, "750"],
  [729, 297, "450"],
  [741, 345, "200"],
  [788, 391, "200"],
  [828, 403, "400"],
  [904, 435, "100"],
  [785, 467, "700"],
];
const gridLabels: [number, number, string][] = [
  [648, 299, "450"],
  [648, 393, "200"],
  [648, 437, "100"],
  [698, 482, "100"],
  [741, 482, "200"],
  [829, 482, "400"],
];

const SectionDrawing = () => (
  <Drawing viewBox="542 188 491 390" role="img" aria-label="截面配筋图">
    <path
      d="M636 228.500H890M636 359.500H890M636 417.500H890M636 446.500H683M641.500 225V450M712.500 359V492M770.500 228V492M886.500 228V492M683.500 446V492M680 489.500H890"
      fill="none"
      stroke="#44464c"
      strokeDasharray="6 3 2 3"
    />
    <path d="M638 225l6 6M638 356l6 6M638 414l6 6M638 443l6 6M680 492l6-6M709 492l6-6M767 492l6-6M883 492l6-6" stroke="#44464c" />
    <g fill="#40424a" fontFamily="Noto Sans" fontSize="12" textAnchor="middle">
      {gridLabels.map(([x, y, t], i) => (
        <text key={i} x={x} y={y}>{t}</text>
      ))}
    </g>
    <path
      d="M690.500 229V446M705.500 229V446M684 236.500H712M684 366.500H770M763.500 360V446M684 439.500H886M879.500 418V426"
      fill="none"
      stroke="#b4d4f4"
      strokeDasharray="3 3"
    />
    <path d="M714 226L724 208" stroke="#8a8a8a" strokeDasharray="3 2" />
    <path d="M683 228H712V359H770V417H886V446H683Z" fill="none" stroke="#fff" strokeWidth="2" />
    <path d="M885 426V454h2" fill="none" stroke="#fff" />
    <path d="M690 426.500H881M879.500 426V453" fill="none" stroke="#c81420" strokeWidth="3" />
    <path d="M686 426.500h4" stroke="#fff" />
    <g fill="none" stroke="#84c46c">
      {dims.map(([a, b, c, d]) => (
        <path
          key={`${a}-${b}-${c}`}
          transform="translate(.5 .5)"
          d={`M${a} ${b}L${c} ${d}${tick(a, b, b === d)}${tick(c, d, b === d)}`}
        />
      ))}
    </g>
    <circle cx="886" cy="446" r="2" fill="#30e030" />
    <g fill="#fff" fontFamily="DejaVu Sans" fontSize="6" textAnchor="middle">
      {dimLabels.map(([x, y, t]) => (
        <text key={`${x}-${y}`} x={x} y={y}>{t}</text>
      ))}
    </g>
  </Drawing>
);

const SectionEditor = () => (
  <Dialog role="dialog" aria-label="截面编辑">
    <DialogTitle>截面编辑</DialogTitle>
    <Pane>
      <DialogTabs role="tablist">
        <DialogTab role="tab">截面</DialogTab>
        <DialogTab role="tab" $on>配筋</DialogTab>
      </DialogTabs>
      <Frame>
        <ToolRow>
          <Tool $pad={6}>纵筋</Tool>
          <Rule />
          <Tool $on $pad={4}>直线</Tool>
          <Tool $pad={2} aria-label="直线选项"><Arrow /></Tool>
          <Combo>
            <input aria-label="钢筋信息" defaultValue="A8@200" />
            <button aria-label="展开"><Arrow /></button>
            <Options role="listbox">
              <li role="option" aria-selected="true">A8@200</li>
            </Options>
          </Combo>
          <Rule />
          <Tool><Icon name="cursor" />选择</Tool>
          <Tool $gap={8} $pad={4}>手动设置参考线<Arrow /></Tool>
          <Rule />
          <Tool $gap={4}><Icon name="level" />设置标高</Tool>
          <Push><More /></Push>
        </ToolRow>
        <ToolRow $fit>
          <Tool $on $pad={4}>横筋</Tool>
          <Rule />
          <Tool $pad={2}>钢筋类型</Tool>
          <RebarType $on $w={35} aria-label="类型一" />
          <RebarType $w={33} aria-label="类型二" />
          <Rule />
          <Tool $gap={4}><Icon name="hook" />编辑弯钩</Tool>
          <Tool $gap={4}><Icon name="endpoint" />编辑端头</Tool>
        </ToolRow>
        <Canvas>
          <SectionDrawing />
          <Coord $x={172}><input aria-label="X" defaultValue="-255.187" /></Coord>
          <Coord $x={237} $light><input aria-label="Y" defaultValue="518.832" /></Coord>
        </Canvas>
        <ToolRow $fit>
          <Tool $on $gap={4}><Icon name="ortho" />正交</Tool>
          <Tool $on $gap={4}><Icon name="dyn" />动态输入</Tool>
          <Tool $gap={4} $pad={6}><Icon name="endpoint" />垂点</Tool>
          <Tool $gap={4} $pad={0}><Icon name="mid" />中点</Tool>
        </ToolRow>
      </Frame>
      <StatusBar>
        <StatusCell $w={97}>(X: -255 Y: 519)</StatusCell>
        <StatusCell>
          左键或Shift+左键指定起点(可选择纵筋中心点);按右键中止或ESC键取消;
          <Grip width="12" height="12" viewBox="0 0 12 12" aria-hidden="true">
            <path d="M8 1h2v2H8zM8 5h2v2H8zM4 5h2v2H4zM8 9h2v2H8zM4 9h2v2H4zM0 9h2v2H0z" fill="#b8b8b8" />
          </Grip>
        </StatusCell>
      </StatusBar>
    </Pane>
  </Dialog>
);

export default function App() {
  return (
    <Shell>
      <Global />
      <TitleBar>
        <Icon name="logo" />
        <Caption>
          <span>广联达BIM钢筋算量软件 GGJ2013 - [C:\Users\Administrator.PC-20141127NRHM\Desktop\白龙村-2016-08-05-13-</span>
          <span>版).GGJ12]</span>
        </Caption>
        <WindowButtons>
          <button aria-label="最小化">
            <Svg width="16" height="16" viewBox="0 0 16 16"><path d="M3 8.500h10" stroke="#888" /></Svg>
          </button>
          <button aria-label="还原">
            <Svg width="16" height="16" viewBox="0 0 16 16"><path d="M3.500 5.500h7v7h-7zM5.500 5V3.500h7v7H11" fill="none" stroke="#888" /></Svg>
          </button>
          <button aria-label="关闭">
            <Svg width="16" height="16" viewBox="0 0 16 16"><path d="M3 3l10 10M13 3L3 13" stroke="#888" /></Svg>
          </button>
        </WindowButtons>
      </TitleBar>

      <Bar>
        <Group $w={937} $flat $gap={11} $pad={7}>
          {menus.map((m) => <MenuItem key={m}>{m}</MenuItem>)}
          <MenuTools>
            <Tool $gap={4}><Icon name="change" />新建变更<Arrow /></Tool>
            <Tool $gap={4}><Icon name="robot" />广小二</Tool>
          </MenuTools>
        </Group>
        <Group $w={188} $pad={28}>
          <News href="#">是否可以识别没有标注..</News>
        </Group>
        <Group $pad={4}>
          <Tool $gap={8}>13907298339<Arrow /></Tool>
          <Tool $gap={10} $pad={4}>造价豆:100<Icon name="bell" /></Tool>
          <Push><More /></Push>
        </Group>
      </Bar>

      <Bar>
        <Group $w={154}>
          <Tool aria-label="新建"><Icon name="file" /></Tool>
          <Tool aria-label="打开"><Icon name="open" /><Arrow /></Tool>
          <Tool aria-label="保存"><Icon name="save" /></Tool>
          <Rule />
          <Tool aria-label="撤销" $gap={6} $pad={5}><Icon name="undo" /><Arrow /></Tool>
          <Push><More /></Push>
        </Group>
        <Group $w={602} $pad={0}>
          <Tools items={drawTools} />
          <Push><More /></Push>
        </Group>
        <Group $pad={2}>
          <ViewMode><Icon name="flat" />二维<Arrow $grey /></ViewMode>
          <Tools items={viewTools} />
          <Rule />
          <Tools items={zoomTools} />
          <Push><More /></Push>
        </Group>
      </Bar>

      <Body>
        <Nav>
          <NavHead>
            <h2>模块导航栏</h2>
            <button aria-label="固定"><Icon name="pin" /></button>
            <button aria-label="关闭"><Icon name="x" /></button>
          </NavHead>
          <NavTab>工程设置</NavTab>
          <NavTab $down>绘图输入</NavTab>
          <NavTools>
            <button aria-label="全部展开"><Icon name="expandAll" /></button>
            <button aria-label="全部折叠"><Icon name="collapseAll" /></button>
          </NavTools>
          <Tree $framed>
            <li>
              <Node><Twist open /><Icon name="openFolder" />常用构件类型</Node>
              <ul>
                {common.map(([icon, label], i) => (
                  <li key={label}><Leaf $last={i === common.length - 1}><Icon name={icon} />{label}</Leaf></li>
                ))}
              </ul>
            </li>
            {folders.map((f) => (
              <li key={f}><Node><Twist /><Icon name="folder" />{f}</Node></li>
            ))}
            <li>
              <Node><Twist open /><Icon name="openFolder" />自定义</Node>
              <ul>
                {custom.map(([icon, label], i) => (
                  <li key={label}>
                    <Leaf $hot={i === 1} $last={i === custom.length - 1}>
                      <Icon name={icon} />
                      {label}
                      {i === 1 && <Extra><Icon name="lib" /><NewTag>NEW</NewTag></Extra>}
                    </Leaf>
                  </li>
                ))}
              </ul>
            </li>
          </Tree>
          <NavTab>单构件输入</NavTab>
          <NavTab>报表预览</NavTab>
        </Nav>

        <Main>
          <MainTools>
            <Tools items={partTools} gap={4} />
            <Rule />
            <SelectWrap>
              <label htmlFor="floor">楼层</label>
              <FloorSelect id="floor"><option>首层</option></FloorSelect>
              <Arrow />
            </SelectWrap>
            <Rule />
            <Tool aria-label="排序"><Icon name="sort" /></Tool>
            <FarTool>下移</FarTool>
          </MainTools>
          <Columns>
            <Parts>
              <SearchRow>
                <SearchBox aria-label="搜索构件" placeholder="搜索构件..." />
                <button aria-label="搜索"><Icon name="search" /></button>
              </SearchRow>
              <PartTree>
                <li>
                  <Node><Twist open /><Icon name="frame" />自定义线</Node>
                  <Picked><Icon name="gear" />ZDYX-1</Picked>
                </li>
              </PartTree>
            </Parts>
            <Props>
              <TabStrip role="tablist"><PropTab role="tab">属性编辑</PropTab></TabStrip>
              <Sheet>
                <SheetBody>
                  <Table>
                    <colgroup><col width="21" /><col width="190" /><col /><col width="60" /></colgroup>
                    <thead><tr><th aria-label="序号" /><th>属性名称</th><th aria-label="属性值" /><th aria-label="附加" /></tr></thead>
                    <tbody>
                      {rows.map(({ n, label, tone, fold }) => (
                        <tr key={n}>
                          <RowNo scope="row" $on={n === 1}>{n}</RowNo>
                          <NameCell $tone={tone} $fold={fold} $on={n === 1}>
                            <div>{fold && <Plus aria-label={`展开${label}`} />}{label}</div>
                          </NameCell>
                          <td />
                          <td />
                        </tr>
                      ))}
                    </tbody>
                  </Table>
                </SheetBody>
                <ScrollTrack>
                  <ScrollButton aria-label="向上滚动">
                    <ChevronMark width="9" height="6" viewBox="0 0 9 6"><path d="M.5 5l4-4 4 4" fill="none" stroke="#444" strokeWidth="2" /></ChevronMark>
                  </ScrollButton>
                  <Thumb />
                  <ScrollButton aria-label="向下滚动">
                    <ChevronMark width="9" height="6" viewBox="0 0 9 6"><path d="M.5 1l4 4 4-4" fill="none" stroke="#444" strokeWidth="2" /></ChevronMark>
                  </ScrollButton>
                </ScrollTrack>
              </Sheet>
            </Props>
          </Columns>
        </Main>
      </Body>

      <SectionEditor />

      <Mini>
        <MiniHead>Poi...<button aria-label="关闭">×</button></MiniHead>
        <StartButton>开始</StartButton>
      </Mini>
      <Score>73</Score>
      <Meter><div /></Meter>
    </Shell>
  );
}
